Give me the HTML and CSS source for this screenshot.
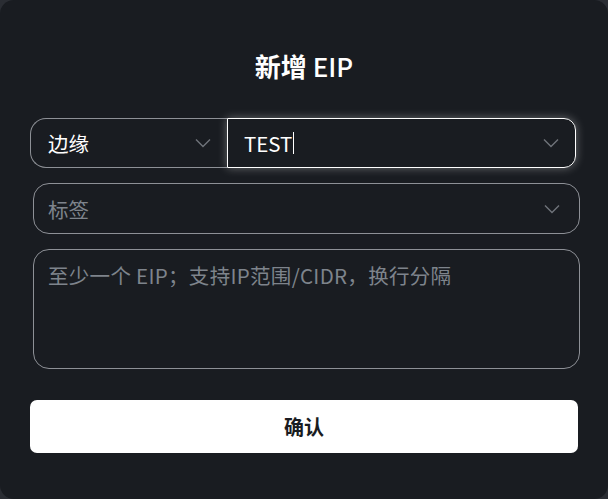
FILE: index.html
```html
<!DOCTYPE html>
<html lang="zh-CN">
<head>
<meta charset="utf-8">
<link rel="stylesheet" href="styles.css">
</head>
<body>
<div class="dialog">
  <h1 class="title">新增 <span class="latin">EIP</span></h1>
  <div class="row-combo">
    <div class="select-left">
      <span class="value">边缘</span>
      <svg class="chev" width="16" height="10" viewBox="0 0 16 10"><path d="M1 1.5 L8 8.5 L15 1.5" fill="none" stroke="currentColor" stroke-width="1.4"/></svg>
    </div>
    <div class="input-focus">
      <span class="value">TEST</span><span class="caret"></span>
      <svg class="chev" width="16" height="10" viewBox="0 0 16 10"><path d="M1 1.5 L8 8.5 L15 1.5" fill="none" stroke="currentColor" stroke-width="1.4"/></svg>
    </div>
  </div>
  <div class="select-tag">
    <span class="placeholder">标签</span>
    <svg class="chev" width="16" height="10" viewBox="0 0 16 10"><path d="M1 1.5 L8 8.5 L15 1.5" fill="none" stroke="currentColor" stroke-width="1.4"/></svg>
  </div>
  <div class="textarea">
    <span class="placeholder">至少一个 EIP；支持IP范围/CIDR，换行分隔</span>
  </div>
  <button class="confirm">确认</button>
</div>
</body>
</html>
```

FILE: styles.css
```css
html, body {
  margin: 0;
  padding: 0;
  background: #2a2d33;
}
body {
  width: 608px;
  height: 499px;
  overflow: hidden;
  font-family: "Noto Sans CJK SC", "Noto Sans", sans-serif;
}
.dialog {
  box-sizing: border-box;
  width: 608px;
  height: 499px;
  background: #191c21;
  border-radius: 14px;
  padding-top: 49px;
}
.title {
  margin: 0 0 36px;
  text-align: center;
  color: #ffffff;
  font-size: 26px;
  line-height: 33px;
  font-weight: 700;
}
.title .latin {
  font-weight: 500;
}
.row-combo {
  display: flex;
  height: 50px;
  margin: 0 32px 0 30px;
}
.select-left {
  box-sizing: border-box;
  width: 197px;
  display: flex;
  align-items: center;
  justify-content: space-between;
  padding: 0 16px 0 17px;
  border: 1px solid #8d9096;
  border-right: none;
  border-radius: 16px 0 0 16px;
  color: #ffffff;
}
.value {
  font-size: 20.5px;
  color: #ffffff;
}
.chev {
  color: #6f737a;
  flex: none;
}
.input-focus {
  box-sizing: border-box;
  flex: 1;
  display: flex;
  align-items: center;
  padding: 0 16px 0 16px;
  border: 1.5px solid #ffffff;
  border-radius: 0 12px 12px 0;
  box-shadow: 0 0 10px rgba(255, 255, 255, 0.35);
}
.input-focus .chev {
  margin-left: auto;
}
.caret {
  width: 1px;
  height: 22px;
  background: #ffffff;
  margin-left: 1px;
}
.select-tag {
  box-sizing: border-box;
  height: 51px;
  margin: 15px 28px 0 33px;
  display: flex;
  align-items: center;
  justify-content: space-between;
  padding: 0 19px 0 14px;
  border: 1px solid #8d9096;
  border-radius: 16px;
}
.placeholder {
  font-size: 20.5px;
  color: #7e848c;
}
.textarea {
  box-sizing: border-box;
  height: 120px;
  margin: 15px 28px 0 33px;
  padding: 10px 14px;
  border: 1px solid #8d9096;
  border-radius: 16px;
  line-height: 30px;
}
.textarea .placeholder {
  font-size: 20.5px;
  letter-spacing: 0.3px;
}
.confirm {
  display: block;
  box-sizing: border-box;
  width: 548px;
  height: 53px;
  margin: 31px 0 0 30px;
  background: #ffffff;
  border: none;
  border-radius: 7px;
  color: #191c21;
  font-family: "Noto Sans CJK SC", "Noto Sans", sans-serif;
  font-size: 20px;
  font-weight: 700;
}
```
